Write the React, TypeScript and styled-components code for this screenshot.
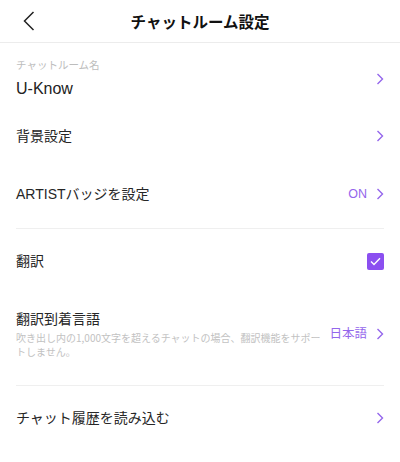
import React from 'react';
import styled, { createGlobalStyle } from 'styled-components';

const GlobalStyle = createGlobalStyle`
  html, body {
    margin: 0;
    padding: 0;
    background: #ffffff;
  }
  body {
    font-family: "Liberation Sans", "Noto Sans CJK JP", sans-serif;
    color: #222222;
  }
`;

const purple = '#9466ec';

const Chevron: React.FC = () => (
    <svg width="8" height="12" viewBox="0 0 8 12">
        <polyline points="1.5,1 6.5,6 1.5,11" fill="none" stroke={purple} strokeWidth="1.4" />
    </svg>
);

const App: React.FC = () => {
    return (
        <>
            <GlobalStyle />
            <Screen>
                <Header>
                    <BackButton>
                        <svg width="12" height="20" viewBox="0 0 12 20">
                            <polyline points="10.5,1 1.5,10 10.5,19" fill="none" stroke="#222" strokeWidth="1.5" />
                        </svg>
                    </BackButton>
                    <Title>チャットルーム設定</Title>
                </Header>

                <Row $top={14} $bottom={7}>
                    <Body>
                        <Caption>チャットルーム名</Caption>
                        <Value>U-Know</Value>
                    </Body>
                    <Trail><Chevron /></Trail>
                </Row>

                <Row>
                    <Body><Label>背景設定</Label></Body>
                    <Trail><Chevron /></Trail>
                </Row>

                <Row>
                    <Body><Label>ARTISTバッジを設定</Label></Body>
                    <Trail><TrailText>ON</TrailText><Chevron /></Trail>
                </Row>

                <Divider />

                <Row>
                    <Body><Label>翻訳</Label></Body>
                    <Checkbox>
                        <svg width="11" height="9" viewBox="0 0 11 9">
                            <polyline points="1,4.5 4,7.5 10,1.2" fill="none" stroke="#fff" strokeWidth="1.4" />
                        </svg>
                    </Checkbox>
                </Row>

                <Row $top={19} $bottom={21}>
                    <Body>
                        <Label>翻訳到着言語</Label>
                        <Note>吹き出し内の1,000文字を超えるチャットの場合、翻訳機能をサポートしません。</Note>
                    </Body>
                    <Trail><TrailText>日本語</TrailText><Chevron /></Trail>
                </Row>

                <Divider />

                <Row>
                    <Body><Label>チャット履歴を読み込む</Label></Body>
                    <Trail><Chevron /></Trail>
                </Row>
            </Screen>
        </>
    );
};

export default App;

const Screen = styled.div`
    width: 400px;
    min-height: 462px;
    background: #fff;
    display: flex;
    flex-direction: column;
`;

const Header = styled.header`
    position: relative;
    height: 42px;
    display: flex;
    align-items: center;
    justify-content: center;
    border-bottom: 1px solid #ececec;
`;

const BackButton = styled.div`
    position: absolute;
    left: 23px;
    top: 11px;
    display: flex;
`;

const Title = styled.h1`
    margin: 0;
    font-family: "Noto Sans CJK JP", sans-serif;
    font-size: 15.5px;
    font-weight: 700;
    line-height: 20px;
    color: #111;
`;

const Row = styled.div<{ $top?: number; $bottom?: number }>`
    display: flex;
    align-items: center;
    min-height: 58px;
    box-sizing: border-box;
    padding: ${p => p.$top ?? 0}px 16px ${p => p.$bottom ?? 0}px 16px;
`;

const Body = styled.div`
    flex: 1;
    display: flex;
    flex-direction: column;
    min-width: 0;
`;

const Caption = styled.div`
    font-family: "Noto Sans CJK JP", sans-serif;
    font-size: 10.5px;
    line-height: 16px;
    color: #bdbdbd;
    margin-bottom: 5px;
`;

const Value = styled.div`
    font-size: 16px;
    line-height: 22px;
    color: #222;
`;

const Label = styled.div`
    font-family: "Liberation Sans", "Noto Sans CJK JP", sans-serif;
    font-size: 14px;
    line-height: 20px;
    color: #262626;
`;

const Note = styled.div`
    font-family: "Noto Sans CJK JP", sans-serif;
    font-size: 10px;
    line-height: 14px;
    color: #c2c2c2;
    margin-top: 2px;
    padding-right: 4px;
    max-width: 306px;
`;

const Trail = styled.div`
    display: flex;
    align-items: center;
    gap: 9px;
`;

const TrailText = styled.span`
    font-family: "Liberation Sans", "Noto Sans CJK JP", sans-serif;
    font-size: 12.5px;
    line-height: 16px;
    color: ${purple};
`;

const Checkbox = styled.div`
    width: 17px;
    height: 17px;
    border-radius: 2px;
    background: #8b4ff0;
    display: flex;
    align-items: center;
    justify-content: center;
`;

const Divider = styled.hr`
    margin: 5px 16px 3px;
    border: none;
    border-top: 1px solid #efefef;
    height: 0;
`;
